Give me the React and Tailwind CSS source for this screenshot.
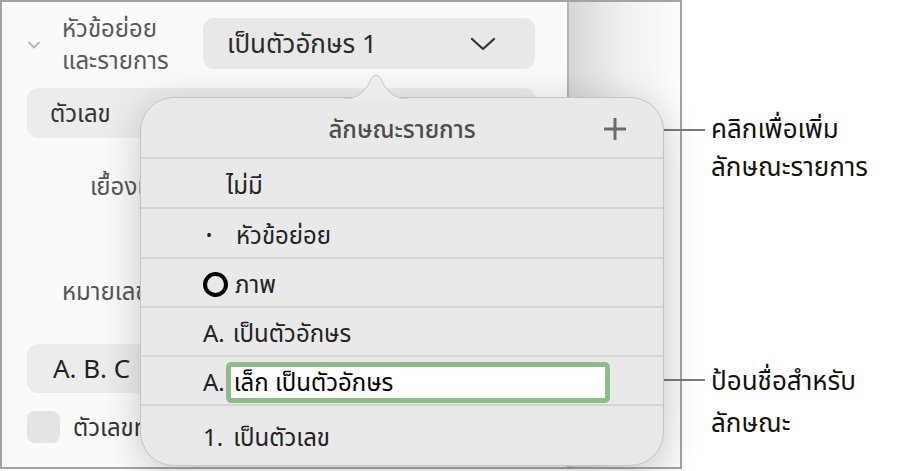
import React from "react";

const font = { fontFamily: '"Noto Sans", "Noto Sans Thai", "DejaVu Sans", sans-serif' };

const Row = ({ h, children, last }) => (
  <div
    className={`flex items-center border-t-2 border-[#d5d5d5] pl-[62px] pt-[3px] ${last ? "flex-1" : ""}`}
    style={last ? undefined : { height: h }}
  >
    {children}
  </div>
);

const App = () => {
  return (
    <div className="relative flex w-[915px] h-[471px] bg-white text-[#222]" style={font}>
      {/* window frame */}
      <div className="flex w-[682px] h-[469px] border-2 border-[#a3a3a3]">
        <div className="w-[565px] bg-[#fafafa] flex flex-col pl-[25px] pr-[32px] pt-[14px]">
          <div className="flex items-center h-[55px]">
            <svg width="14" height="10" viewBox="0 0 14 10" className="mt-[2px]">
              <path d="M2 2.5 L7 7.5 L12 2.5" fill="none" stroke="#b5b5b5" strokeWidth="1.8" strokeLinecap="round" strokeLinejoin="round" />
            </svg>
            <div className="ml-[21px] w-[140px] text-[24px] leading-[32px] text-[#585858] whitespace-nowrap">
              หัวข้อย่อย<br />และรายการ
            </div>
            <div className="ml-[1px] flex-1 h-[51px] rounded-[11px] bg-[#e8e8e8] flex items-center justify-between pl-[24px] pr-[38px] text-[26px] text-[#2a2a2a]">
              <span>เป็นตัวอักษร 1</span>
              <svg width="28" height="16" viewBox="0 0 28 16">
                <path d="M3 3 L14 13 L25 3" fill="none" stroke="#333" strokeWidth="2.2" strokeLinecap="round" strokeLinejoin="round" />
              </svg>
            </div>
          </div>
          <div className="mt-[17px] h-[50px] rounded-[11px] bg-[#ececec] flex items-center pl-[23px] text-[24px] text-[#333]">
            ตัวเลข
          </div>
          <div className="h-[94px] flex items-center pl-[63px] pt-[2px] text-[24px] text-[#555]">เยื้องเข้า</div>
          <div className="h-[112px] flex items-center pl-[35px] pt-[6px] text-[24px] text-[#555]">หมายเลข</div>
          <div className="h-[49px] rounded-[11px] bg-[#ececec] flex items-center pl-[26px] text-[26px] text-[#222]">
            A. B. C
          </div>
          <div className="mt-[16px] flex items-center">
            <div className="w-[33px] h-[32px] rounded-[8px] bg-[#e4e4e4]" />
            <span className="ml-[13px] text-[24px] text-[#333]">ตัวเลขทั้งหมด</span>
          </div>
        </div>
        <div className="flex-1 border-l-2 border-[#b3b3b3] bg-gradient-to-r from-[#d7d7d7] via-[#f1f1f1] to-[#fcfcfc]" />
      </div>

      {/* callouts */}
      <div className="flex-1 flex flex-col pl-[29px] pt-[109px] text-[26px] leading-[38px] text-[#111] whitespace-nowrap">
        <div className="relative">
          <div className="absolute left-[-80px] top-[20px] w-[74px] h-[2px] bg-[#7a7a7a]" />
          คลิกเพื่อเพิ่ม<br />ลักษณะรายการ
        </div>
        <div className="relative mt-[174px] leading-[42px]">
          <div className="absolute left-[-105px] top-[20px] w-[99px] h-[2px] bg-[#7a7a7a]" />
          ป้อนชื่อสำหรับ<br />ลักษณะ
        </div>
      </div>

      {/* popover */}
      <div className="absolute left-[140px] top-[97px] w-[524px] h-[369px] rounded-[34px] bg-[#e9e9e9] border border-[#c4c4c4] shadow-[0_8px_40px_rgba(0,0,0,0.2)] flex flex-col">
        <svg className="absolute left-[203px] top-[-25px]" width="64" height="27" viewBox="0 0 64 27">
          <path d="M0 26 C14 26 22 18 27 6 C29 1 35 1 37 6 C42 18 50 26 64 26" fill="#ededed" stroke="#c4c4c4" strokeWidth="1" />
          <rect x="0" y="26" width="64" height="1" fill="#ededed" />
        </svg>
        <div className="h-[59px] flex items-center justify-center relative">
          <span className="text-[24px] text-[#4d4d4d] font-medium pt-[2px]">ลักษณะรายการ</span>
          <svg className="absolute right-[37px] top-[20px]" width="22" height="22" viewBox="0 0 22 22">
            <path d="M11 1 V21 M1 11 H21" stroke="#6b6b6b" strokeWidth="3" strokeLinecap="round" />
          </svg>
        </div>
        <Row h={50}>
          <span className="ml-[23px] text-[24px]">ไม่มี</span>
        </Row>
        <Row h={50}>
          <span className="ml-[3px] w-[30px] text-[16px]">•</span>
          <span className="text-[24px]">หัวข้อย่อย</span>
        </Row>
        <Row h={49}>
          <span className="w-[25px] h-[25px] rounded-full border-[4px] border-black" />
          <span className="ml-[7px] text-[24px]">ภาพ</span>
        </Row>
        <Row h={49}>
          <span className="text-[24px]">A.</span>
          <span className="ml-[8px] text-[24px]">เป็นตัวอักษร</span>
        </Row>
        <Row h={49}>
          <span className="text-[24px]">A.</span>
          <div className="ml-[1px] w-[384px] h-[41px] rounded-[5px] border-[5px] border-[#8dbb8a] bg-white flex items-center pl-[3px] text-[24px] text-black">
            เล็ก เป็นตัวอักษร
          </div>
        </Row>
        <Row last>
          <div className="flex items-center h-[48px]">
            <span className="text-[24px]">1.</span>
            <span className="ml-[10px] text-[24px]">เป็นตัวเลข</span>
          </div>
        </Row>
      </div>
    </div>
  );
};

export default App;
